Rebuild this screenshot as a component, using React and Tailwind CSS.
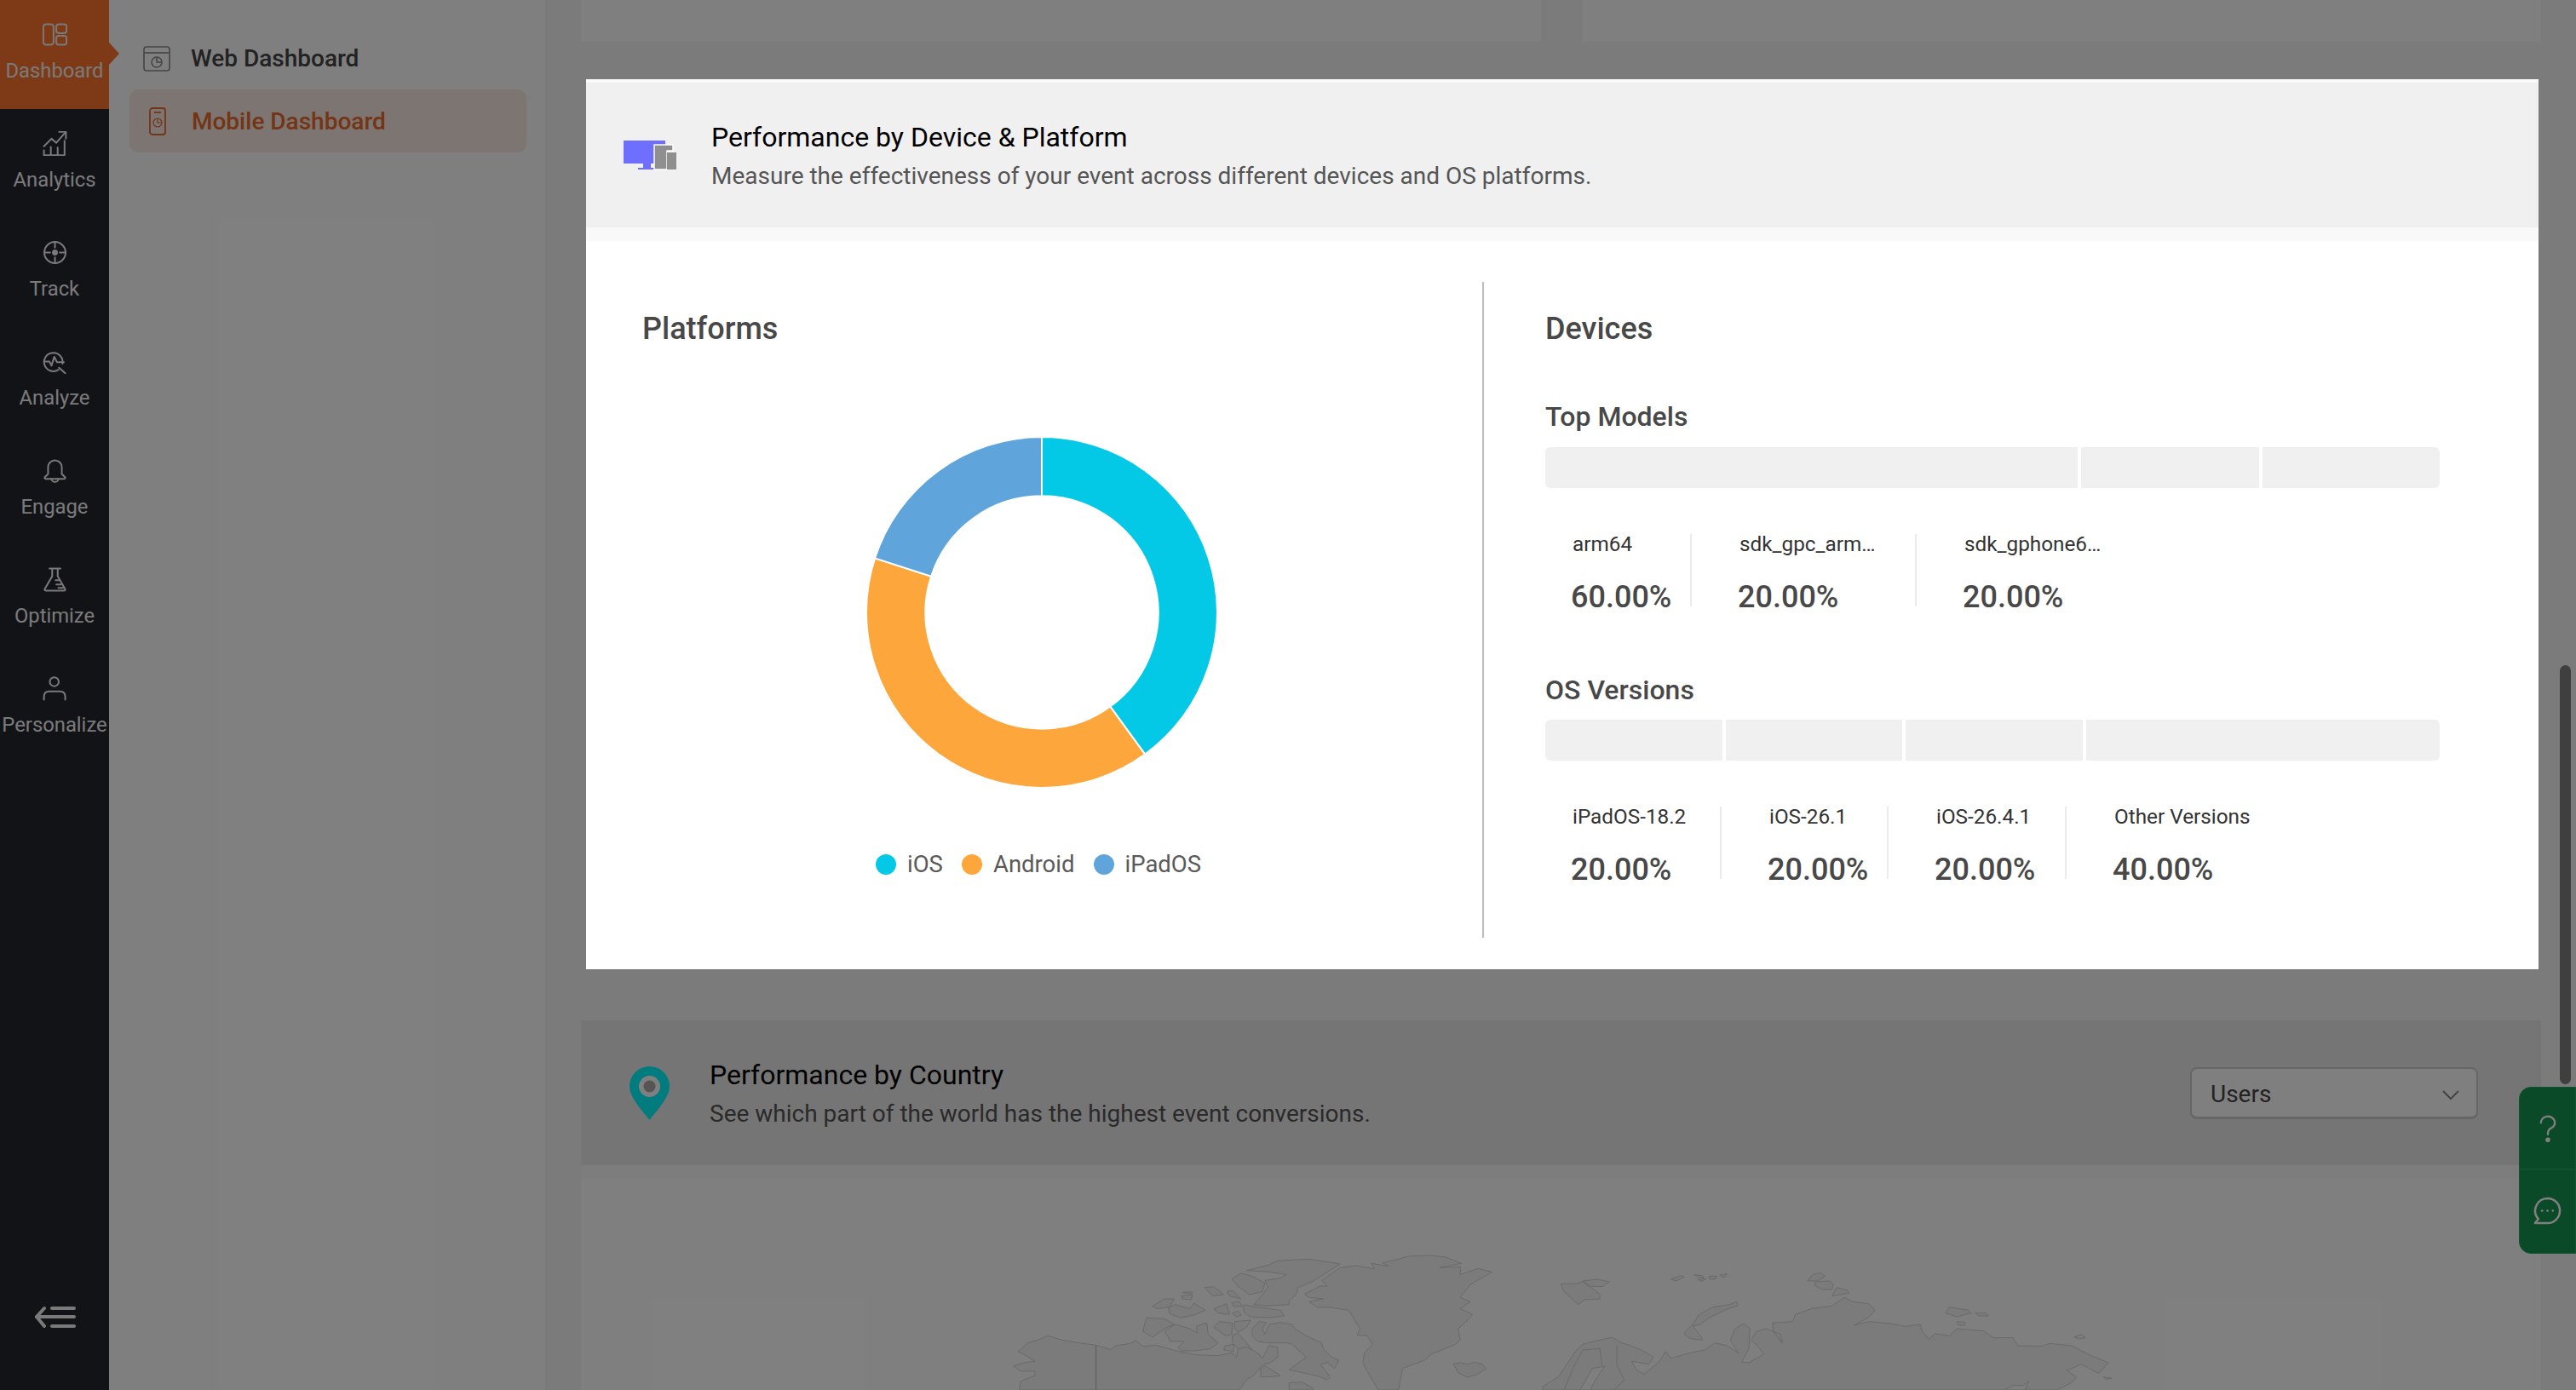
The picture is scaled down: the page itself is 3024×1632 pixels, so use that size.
const navIcons = {
  dashboard: (
    <>
      <rect x="1" y="3" width="15" height="30" rx="4" />
      <rect x="20" y="3" width="15" height="13" rx="3.5" />
      <rect x="20" y="20" width="15" height="13" rx="3.5" />
    </>
  ),
  analytics: (
    <>
      <path d="M2 22 L13 11 L20 17 L33 2" />
      <path d="M24 1 H34 V11" />
      <path d="M2 28 V35 H32 V14" />
      <path d="M12 35 V23 M22 35 V24" />
    </>
  ),
  track: (
    <>
      <circle cx="18" cy="18" r="15.5" />
      <circle cx="18" cy="18" r="3" fill="currentColor" />
      <path d="M18 3 V11 M18 25 V33 M3 18 H11 M25 18 H33" />
    </>
  ),
  analyze: (
    <>
      <path d="M29 21 A13.5 13.5 0 1 0 23 30" />
      <path d="M3 18 H10 L13 24 L17 11 L21 19 H31" />
      <path d="M24 27 L33 35" />
    </>
  ),
  engage: (
    <>
      <path d="M8 23 V13 A10 10 0 0 1 28 13 V23 L33 28 Q33 30 31 30 H5 Q3 30 3 28 Z" />
      <path d="M13 30 A5 4.5 0 0 0 23 30" />
    </>
  ),
  optimize: (
    <>
      <path d="M10 2 H26 M14 2 V13 L3 32 Q3 34 5 34 H31 Q33 34 33 32 L22 13 V2" />
      <path d="M27 25 H20 M30 30 H23 M24 19 H19" />
    </>
  ),
  personalize: (
    <>
      <circle cx="17" cy="8" r="6.5" />
      <path d="M2 34 V30 Q2 22 10 22 H25 Q33 22 33 30 V34" />
    </>
  ),
};

const navItems = [
  { key: "dashboard", label: "Dashboard", active: true },
  { key: "analytics", label: "Analytics" },
  { key: "track", label: "Track" },
  { key: "analyze", label: "Analyze" },
  { key: "engage", label: "Engage" },
  { key: "optimize", label: "Optimize" },
  { key: "personalize", label: "Personalize" },
];

const topModels = [
  { label: "arm64", value: "60.00%", className: "w-[172px] pl-[32px] border-r-2" },
  { label: "sdk_gpc_arm…", value: "20.00%", className: "w-[264px] pl-[56px] border-r-2" },
  { label: "sdk_gphone6…", value: "20.00%", className: "pl-[56px]" },
];

const osVersions = [
  { label: "iPadOS-18.2", value: "20.00%", className: "w-[207px] pl-[32px] border-r-2" },
  { label: "iOS-26.1", value: "20.00%", className: "w-[196px] pl-[56px] border-r-2" },
  { label: "iOS-26.4.1", value: "20.00%", className: "w-[209px] pl-[56px] border-r-2" },
  { label: "Other Versions", value: "40.00%", className: "pl-[56px]" },
];

const Sidebar = () => (
  <aside className="w-[128px] shrink-0 bg-[#24262e] flex flex-col relative">
    {navItems.map((item) => (
      <div
        key={item.key}
        className={`h-[128px] shrink-0 flex flex-col items-center pt-[26px] relative ${
          item.active ? "bg-[#fc742e]" : ""
        } text-[#f4f4f4]`}
      >
        <svg viewBox="0 0 36 36" className="w-[29px] h-[29px]" fill="none" stroke="currentColor" strokeWidth="2.5" strokeLinecap="round" strokeLinejoin="round">
          {navIcons[item.key]}
        </svg>
        <span className="text-[23.8px] leading-[28px] mt-[14px] whitespace-nowrap">{item.label}</span>
        {item.active && (
          <span className="absolute left-[128px] top-[50px] w-0 h-0 border-y-[13px] border-y-transparent border-l-[12px] border-l-[#fc742e]" />
        )}
      </div>
    ))}
    <svg viewBox="0 0 48 28" className="w-[48px] h-[28px] mt-auto mb-[71px] ml-[41px] text-[#f4f4f4]" fill="none" stroke="currentColor" strokeWidth="4" strokeLinecap="round" strokeLinejoin="round">
      <path d="M11 3 L2 13 L11 24" />
      <path d="M2 13 H46 M20 3 H46 M20 24 H46" />
    </svg>
  </aside>
);

const SubMenu = () => (
  <div className="w-[512px] shrink-0 bg-white pl-[24px] pr-[22px] pt-[49px] text-[28px]">
    <div className="h-[40px] flex items-center pl-[16px] gap-[24px] font-medium text-[#444444]">
      <svg viewBox="0 0 32 30" className="w-[32px] h-[30px]" fill="none" stroke="#8a8a8a" strokeWidth="1.6">
        <rect x="1" y="1" width="30" height="28" rx="3" />
        <path d="M1 8 H31" />
        <circle cx="16" cy="19" r="6" />
        <path d="M16 13 V19 H22" />
      </svg>
      Web Dashboard
    </div>
    <div className="mt-[16px] h-[74px] rounded-[10px] bg-[#f9ebe3] flex items-center pl-[23px] pt-[1px] gap-[30px] font-medium text-[#e8692c]">
      <svg viewBox="0 0 20 33" className="w-[20px] h-[33px]" fill="none" stroke="currentColor" strokeWidth="1.8">
        <rect x="1" y="1" width="18" height="31" rx="3" />
        <path d="M6 6 H14" />
        <circle cx="10" cy="18" r="5" strokeWidth="1.2" />
        <path d="M10 13 V18 H15" strokeWidth="1.2" />
      </svg>
      Mobile Dashboard
    </div>
  </div>
);

const SectionHeader = ({ icon, title, subtitle, children }) => (
  <div className="flex items-center">
    {icon}
    <div className="pt-[2px]">
      <div className="text-[32px] leading-[40px] text-black">{title}</div>
      <div className="text-[28px] leading-[36px] mt-[8px] text-[#555555]">{subtitle}</div>
    </div>
    {children}
  </div>
);

const Stats = ({ items }) => (
  <div className="flex mt-[54px] h-[85px]">
    {items.map((item) => (
      <div key={item.label} className={`${item.className} border-[#ebebeb]`}>
        <div className="text-[24.3px] leading-[24px] text-[#333333] whitespace-nowrap">{item.label}</div>
        <div className="text-[36px] leading-[24px] mt-[38px] font-medium text-[#484848] -ml-[2px]">{item.value}</div>
      </div>
    ))}
  </div>
);

const StackedBar = ({ segments }) => (
  <div className="flex gap-[4px] h-[48px] rounded-[6px] overflow-hidden">
    {segments.map((grow, i) => (
      <div key={i} className={`bg-[#f0f0f0] ${grow}`} />
    ))}
  </div>
);

const Donut = () => (
  <svg viewBox="0 0 410 410" className="w-[412px] h-[412px] ml-[263px] mt-[106px]">
    {/* iOS 40%, Android 40%, iPadOS 20%, clockwise from the top */}
    <path d="M205 0 A205 205 0 0 1 325.5 370.8 L285 315 A136 136 0 0 0 205 69 Z" fill="#03c8e6" stroke="#fff" strokeWidth="2" />
    <path d="M325.5 370.8 A205 205 0 0 1 10 141.7 L75.7 163 A136 136 0 0 0 285 315 Z" fill="#fca63c" stroke="#fff" strokeWidth="2" />
    <path d="M10 141.7 A205 205 0 0 1 205 0 L205 69 A136 136 0 0 0 75.7 163 Z" fill="#5fa5db" stroke="#fff" strokeWidth="2" />
  </svg>
);

const LegendItem = ({ color, label }) => (
  <div className="flex items-center gap-[13px]">
    <span className={`w-[24px] h-[24px] rounded-full ${color}`} />
    {label}
  </div>
);

const DeviceSection = () => (
  <section className="relative z-20 ml-[6px] mr-[3px] mt-[44px] h-[1045px] shrink-0 bg-white">
    <div className="bg-[#f9f9f9] pt-[4px] pb-[16px]">
      <div className="h-[170px] bg-[#f0f0f0] pl-[44px] flex items-center">
        <SectionHeader
          title="Performance by Device & Platform"
          subtitle="Measure the effectiveness of your event across different devices and OS platforms."
          icon={
            <svg viewBox="0 0 62 36" className="w-[62px] h-[36px] mr-[41px]">
              <path d="M0 1 H49 V28 H32 V33 H38 V35 H17 V33 H23 V28 H0 Z" fill="#6e6eff" />
              <path d="M36 6 H58 V13 H51 V35 H36 Z" fill="#8f8f8f" stroke="#fff" strokeWidth="1.5" />
              <path d="M51 15 H62 V35 H51 Z" fill="#8f8f8f" />
            </svg>
          }
        />
      </div>
    </div>
    <div className="flex mt-[48px] h-[770px] text-[#484848]">
      <div className="w-[1054px] shrink-0 border-r-2 border-[#bdbdbd] pl-[66px] pt-[34px]">
        <h2 className="text-[36px] leading-[42px] font-medium">Platforms</h2>
        <Donut />
        <div className="flex gap-[22px] ml-[274px] mt-[74px] text-[27.5px] leading-[32px] text-[#5a5a5a]">
          <LegendItem color="bg-[#03c8e6]" label="iOS" />
          <LegendItem color="bg-[#fca63c]" label="Android" />
          <LegendItem color="bg-[#5fa5db]" label="iPadOS" />
        </div>
      </div>
      <div className="w-[1050px] ml-[72px] pt-[34px]">
        <h2 className="text-[36px] leading-[42px] font-medium">Devices</h2>
        <h3 className="text-[32px] leading-[40px] font-medium mt-[62px]">Top Models</h3>
        <div className="mt-[16px]">
          <StackedBar segments={["grow-[3]", "grow", "grow"]} />
        </div>
        <Stats items={topModels} />
        <h3 className="text-[32px] leading-[40px] font-medium mt-[78px]">OS Versions</h3>
        <div className="mt-[15px]">
          <StackedBar segments={["w-[208px]", "w-[207px]", "w-[208px]", "flex-1"]} />
        </div>
        <Stats items={osVersions} />
      </div>
    </div>
  </section>
);

// Land outlines traced at low detail, very pale under the backdrop
const WorldMap = () => (
  <svg viewBox="682 1384 2301 248" className="w-full h-[248px] block" fill="#f6f6f6" stroke="#d4d4d4">
    <g transform="translate(1170 1460) scale(0.3333)">
      <path vectorEffect="non-scaling-stroke" d="M75 380 L110 350 L150 338 L180 325 L230 340 L290 350 L350 358 L400 373 L420 360 L470 352 L490 342 L515 362 L560 358 L640 380 L700 392 L780 395 L830 385 L845 400 L850 370 L880 360 L900 375 L925 390 L935 405 L960 360 L990 365 L990 400 L965 420 L940 425 L905 465 L880 480 L855 516 L80 516 L85 485 L135 465 L135 450 L85 450 L60 432 L95 420 L135 415 L105 395 Z" />
      <path vectorEffect="non-scaling-stroke" d="M350 358 V516" stroke="#b8b8b8" />
      <path vectorEffect="non-scaling-stroke" d="M527 262 L590 265 L625 285 L590 300 L550 330 L515 310 Z" />
      <path vectorEffect="non-scaling-stroke" d="M590 310 L630 285 L680 300 L705 315 L705 290 L740 280 L745 320 L780 350 L755 370 L700 378 L650 378 L640 365 L660 345 L610 345 L605 330 Z" />
      <path vectorEffect="non-scaling-stroke" d="M765 295 L785 275 L830 280 L828 320 L805 325 Z" />
      <path vectorEffect="non-scaling-stroke" d="M838 275 L895 270 L880 295 L850 312 L838 300 Z" />
      <path vectorEffect="non-scaling-stroke" d="M850 315 L880 350 L900 375 L880 365 L850 370 L830 350 L830 325 Z" />
      <path vectorEffect="non-scaling-stroke" d="M900 300 L925 275 L950 278 L935 300 L945 320 L960 285 L1000 278 L1040 285 L1050 300 L1090 325 L1145 350 L1150 370 L1180 400 L1205 412 L1190 440 L1165 420 L1140 425 L1175 470 L1165 480 L1125 465 L1100 460 L1030 445 L1090 400 L1040 355 L1020 350 L960 350 L920 345 L900 325 Z" />
      <path vectorEffect="non-scaling-stroke" d="M880 95 L960 75 L990 60 L1100 55 L1210 72 L1150 110 L1110 135 L1060 155 L1055 180 L1030 200 L1030 215 L950 220 L905 215 L925 195 L955 155 L945 130 L1000 122 L1020 110 L960 100 Z" />
      <path vectorEffect="non-scaling-stroke" d="M828 125 L860 105 L900 115 L945 140 L935 170 L890 180 L850 150 Z" />
      <path vectorEffect="non-scaling-stroke" d="M870 215 L905 222 L1000 235 L1012 255 L960 262 L890 258 L870 240 Z" />
      <path vectorEffect="non-scaling-stroke" d="M605 225 L630 215 L680 230 L695 210 L735 235 L700 250 L650 262 L610 248 Z" />
      <path vectorEffect="non-scaling-stroke" d="M548 222 L590 195 L625 195 L610 222 L570 230 Z" />
      <path vectorEffect="non-scaling-stroke" d="M765 230 L810 212 L820 250 L780 245 Z" />
      <path vectorEffect="non-scaling-stroke" d="M830 245 L850 238 L862 252 L845 258 Z" />
      <path vectorEffect="non-scaling-stroke" d="M732 155 L765 152 L800 180 L760 185 Z" />
      <path vectorEffect="non-scaling-stroke" d="M812 170 L830 165 L860 195 L820 185 Z" />
      <path vectorEffect="non-scaling-stroke" d="M650 185 L690 180 L685 198 L655 195 Z" />
      <path vectorEffect="non-scaling-stroke" d="M655 172 L690 170 L685 178 Z" />
      <path vectorEffect="non-scaling-stroke" d="M828 208 L855 205 L865 222 L835 222 Z" />
      <path vectorEffect="non-scaling-stroke" d="M805 360 L835 355 L835 380 L800 375 Z" />
      <path vectorEffect="non-scaling-stroke" d="M930 440 L945 430 L1000 465 L960 470 L930 470 Z" />
      <path vectorEffect="non-scaling-stroke" d="M1030 490 L1075 488 L1115 510 L1115 516 L1030 516 Z" />
      <path vectorEffect="non-scaling-stroke" d="M1085 178 L1140 150 L1165 150 L1145 130 L1210 85 L1270 78 L1330 90 L1320 70 L1380 80 L1360 68 L1395 60 L1450 45 L1530 42 L1582 48 L1637 70 L1560 85 L1633 82 L1633 110 L1694 88 L1745 100 L1668 145 L1633 190 L1668 205 L1633 230 L1676 250 L1650 280 L1625 300 L1633 340 L1616 355 L1530 390 L1510 410 L1430 440 L1415 516 L1345 516 L1310 460 L1290 420 L1295 385 L1325 355 L1305 325 L1270 322 L1280 300 L1240 235 L1170 225 L1130 225 L1100 205 L1150 195 L1100 190 Z" />
    </g>
    <g transform="translate(1680 1400) scale(0.574 0.3333)">
      <path vectorEffect="non-scaling-stroke" d="M45 605 L60 600 L75 605 L90 598 L105 605 L112 622 L95 640 L75 652 L55 635 L50 618 Z" />
      <path vectorEffect="non-scaling-stroke" d="M265 322 L295 322 L310 315 L335 345 L345 360 L345 375 L315 378 L300 395 L285 370 L272 350 Z" />
      <path vectorEffect="non-scaling-stroke" d="M310 312 L340 306 L365 315 L350 332 L325 330 Z" />
      <path vectorEffect="non-scaling-stroke" d="M490 305 L510 293 L518 298 L500 312 Z M538 290 L555 293 L558 302 L545 296 Z M568 296 L584 294 L582 305 L570 306 Z M590 292 L605 287 L600 300 Z M546 306 L562 305 L552 314 Z" />
      <path vectorEffect="non-scaling-stroke" d="M520 490 L535 465 L548 430 L575 405 L610 395 L625 385 L628 398 L600 415 L570 440 L550 465 L535 470 L553 510 L555 520 L530 515 L518 500 Z" />
      <path vectorEffect="non-scaling-stroke" d="M770 312 L780 290 L795 283 L806 295 L790 312 Z M785 315 L815 312 L822 325 L820 342 L800 342 L785 328 Z M830 335 L852 345 L855 355 L820 365 Z" />
      <path vectorEffect="non-scaling-stroke" d="M228 696 L228 685 L260 650 L280 600 L295 560 L310 535 L345 520 L370 510 L390 530 L400 535 L430 555 L455 580 L445 605 L410 595 L420 625 L435 640 L465 600 L480 560 L490 585 L530 565 L560 555 L580 530 L605 540 L628 565 L612 520 L622 480 L640 462 L652 480 L650 550 L635 598 L650 600 L680 570 L670 545 L655 520 L665 490 L685 480 L715 500 L718 530 L700 490 L698 460 L740 455 L745 430 L780 408 L820 400 L845 370 L862 385 L895 392 L908 415 L895 440 L865 468 L895 455 L940 462 L970 472 L1000 465 L1005 490 L1018 518 L1030 498 L1060 505 L1075 480 L1130 488 L1150 512 L1190 512 L1200 540 L1250 542 L1265 532 L1310 540 L1350 575 L1385 600 L1365 638 L1330 605 L1300 628 L1320 650 L1310 670 L1280 696 Z" />
      <path vectorEffect="non-scaling-stroke" d="M272 696 L290 620 L310 555 L345 550 L350 610 M380 540 L380 610 L395 660 L375 696" fill="none" />
      <path vectorEffect="non-scaling-stroke" d="M305 696 L330 620 L355 612 L340 650 L325 696 Z" fill="#ffffff" />
      <path vectorEffect="non-scaling-stroke" d="M1052 425 L1060 405 L1100 415 L1105 425 L1075 438 Z M1113 425 L1135 425 L1140 435 L1120 435 Z M1075 455 L1092 458 L1092 468 L1078 468 Z M1315 510 L1330 500 L1338 512 L1325 516 Z M1375 650 L1392 655 L1380 658 Z" />
      <path vectorEffect="non-scaling-stroke" d="M1172 696 L1190 680 L1210 680 L1222 665 L1215 696 Z" fill="#ffffff" />
    </g>
  </svg>
);

const CountrySection = () => (
  <section className="mt-[60px] flex-1 bg-white">
    <div className="bg-[#fafafa] pb-[16px]">
      <div className="h-[170px] bg-[#ebebeb] pl-[57px] pr-[74px] flex items-center">
        <SectionHeader
          title="Performance by Country"
          subtitle="See which part of the world has the highest event conversions."
          icon={
            <svg viewBox="0 0 47 63" className="w-[47px] h-[63px] mr-[47px]">
              <path d="M23.5 0 C36.5 0 47 10.5 47 23.5 C47 36 33 51 23.5 63 C14 51 0 36 0 23.5 C0 10.5 10.5 0 23.5 0 Z" fill="#00f8ff" />
              <circle cx="23.5" cy="23.5" r="12.5" fill="#ffffff" />
              <circle cx="23.5" cy="23.5" r="7" fill="#aaaaaa" />
            </svg>
          }
        />
        <div className="ml-auto w-[338px] h-[61px] border-2 border-[#cccccc] border-b-[3px] rounded-[8px] bg-white flex items-center justify-between pt-[4px] pl-[22px] pr-[20px] text-[28px] text-[#444444]">
          Users
          <svg viewBox="0 0 20 12" className="w-[20px] h-[12px] mt-[2px]" fill="none" stroke="#888888" strokeWidth="2">
            <path d="M1 1 L10 10 L19 1" />
          </svg>
        </div>
      </div>
    </div>
    <WorldMap />
  </section>
);

const App = () => (
  <div className="relative h-screen w-full flex overflow-hidden font-['Roboto',sans-serif]">
    <Sidebar />
    <SubMenu />
    <main className="flex-1 min-w-0 bg-[#f6f6f6] border-l-2 border-[#f2f2f2] pl-[40px] pr-[41px] flex flex-col">
      <div className="flex gap-[48px] h-[49px] shrink-0">
        <div className="flex-1 bg-white" />
        <div className="flex-1 bg-white" />
      </div>
      <DeviceSection />
      <CountrySection />
    </main>

    {/* scrollbar thumb */}
    <div className="absolute right-[6px] top-[781px] w-[13px] h-[492px] rounded-full bg-[#7f7f7f] z-0" />

    {/* help tab */}
    <div className="absolute right-0 top-[1276px] w-[67px] h-[196px] rounded-l-[14px] bg-[#149450] border border-[#1ea85e] text-[#ffffff] flex flex-col">
      <div className="h-[97px] flex items-center justify-center border-b-2 border-[#1ea85e]">
        <svg viewBox="0 0 22 34" className="w-[20px] h-[33px] mt-[2px]" fill="none" stroke="currentColor" strokeWidth="2.6" strokeLinecap="round">
          <path d="M2 9 A9 8 0 1 1 15 16 C12 18 11 19 11 24" />
          <circle cx="11" cy="31" r="1.8" fill="currentColor" />
        </svg>
      </div>
      <div className="flex-1 flex items-center justify-center">
        <svg viewBox="0 0 34 34" className="w-[33px] h-[33px] -mt-[3px]" fill="none" stroke="currentColor" strokeWidth="2.6" strokeLinejoin="round">
          <path d="M17 2 A15 15 0 1 1 17 32 H2 L6 27 A15 15 0 0 1 17 2 Z" />
          <circle cx="10.5" cy="17" r="1.4" fill="currentColor" stroke="none" />
          <circle cx="17" cy="17" r="1.4" fill="currentColor" stroke="none" />
          <circle cx="23.5" cy="17" r="1.4" fill="currentColor" stroke="none" />
        </svg>
      </div>
    </div>

    {/* backdrop dims everything except the highlighted section */}
    <div className="absolute inset-0 bg-black/50 z-10" />
  </div>
);

export default App;
